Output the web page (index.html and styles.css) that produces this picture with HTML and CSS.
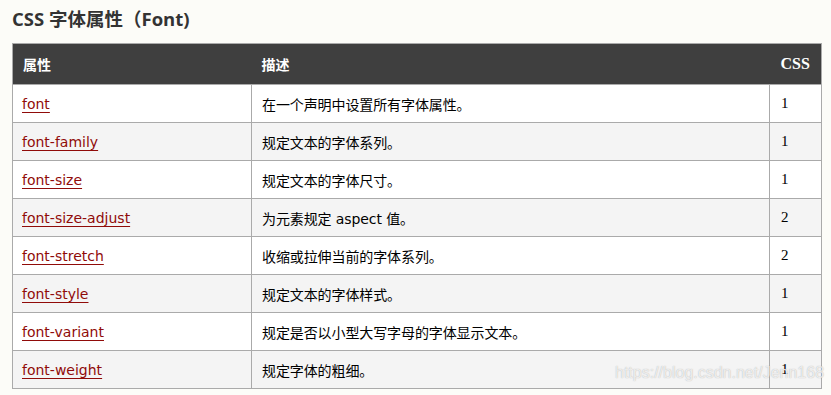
FILE: index.html
```html
<!DOCTYPE html>
<html lang="zh">
<head>
<meta charset="utf-8">
<title>CSS 字体属性</title>
<link rel="stylesheet" href="styles.css">
</head>
<body>
<div class="page">
  <h2 class="title">CSS 字体属性（Font)</h2>
  <table class="ref">
    <thead>
      <tr>
        <th class="c1">属性</th>
        <th class="c2">描述</th>
        <th class="c3 css">CSS</th>
      </tr>
    </thead>
    <tbody>
      <tr><td><a href="#">font</a></td><td>在一个声明中设置所有字体属性。</td><td class="num">1</td></tr>
      <tr><td><a href="#">font-family</a></td><td>规定文本的字体系列。</td><td class="num">1</td></tr>
      <tr><td><a href="#">font-size</a></td><td>规定文本的字体尺寸。</td><td class="num">1</td></tr>
      <tr><td><a href="#">font-size-adjust</a></td><td>为元素规定 aspect 值。</td><td class="num">2</td></tr>
      <tr><td><a href="#">font-stretch</a></td><td>收缩或拉伸当前的字体系列。</td><td class="num">2</td></tr>
      <tr><td><a href="#">font-style</a></td><td>规定文本的字体样式。</td><td class="num">1</td></tr>
      <tr><td><a href="#">font-variant</a></td><td>规定是否以小型大写字母的字体显示文本。</td><td class="num">1</td></tr>
      <tr><td><a href="#">font-weight</a></td><td>规定字体的粗细。</td><td class="num">1</td></tr>
    </tbody>
  </table>
  <div class="watermark">https://blog.csdn.net/Jenn168</div>
</div>
</body>
</html>
```

FILE: styles.css
```css
html, body {
  margin: 0;
  padding: 0;
  background: #fcfcf8;
}
.page {
  position: relative;
  padding: 6px 9px 0 12px;
  height: 389px;
  box-sizing: border-box;
  font-family: "DejaVu Sans", "Noto Sans CJK SC", sans-serif;
}
.title {
  margin: 0 0 11px 0;
  height: 26px;
  line-height: 26px;
  font-family: "Open Sans", "Noto Sans CJK SC", sans-serif;
  font-size: 18.5px;
  font-weight: 700;
  color: #333333;
}
.ref {
  width: 810px;
  border-collapse: collapse;
  border: 1px solid #aaaaaa;
  font-size: 14px;
}
.ref th {
  background: #3f3f3f;
  color: #ffffff;
  text-align: left;
  height: 41px;
  padding: 0 10px;
  box-sizing: border-box;
  font-family: "Noto Sans CJK SC", sans-serif;
  font-size: 14px;
  font-weight: 700;
  border: none;
}
.ref th.css {
  font-family: "Liberation Serif", serif;
  font-size: 16px;
  padding: 0 11px 0 11px;
}
.c1 { width: 239px; }
.c2 { width: 518px; }
.ref td {
  height: 38px;
  padding: 0 10px;
  box-sizing: border-box;
  border: 1px solid #aaaaaa;
  color: #000000;
  font-family: "DejaVu Sans", "Noto Sans CJK SC", sans-serif;
  vertical-align: middle;
}
.ref td:nth-child(1) {
  padding-left: 9px;
}
.ref td:nth-child(2) {
  font-size: 14px;
  letter-spacing: -0.1px;
}
.ref td.num {
  padding-left: 11px;
  font-family: "Liberation Serif", serif;
  font-size: 15px;
}
.ref tbody tr:nth-child(even) td {
  background: #f4f4f4;
}
.ref tbody tr:nth-child(odd) td {
  background: #ffffff;
}
.ref a {
  color: #900b09;
  text-decoration: underline;
  text-underline-offset: 3px;
}
.watermark {
  position: absolute;
  left: 615px;
  top: 364px;
  font-family: "Liberation Sans", Arial, sans-serif;
  font-size: 16px;
  color: rgba(255, 255, 255, 0.75);
  text-shadow: 0 0 1px rgba(120, 120, 120, 0.6);
  white-space: nowrap;
}
```
